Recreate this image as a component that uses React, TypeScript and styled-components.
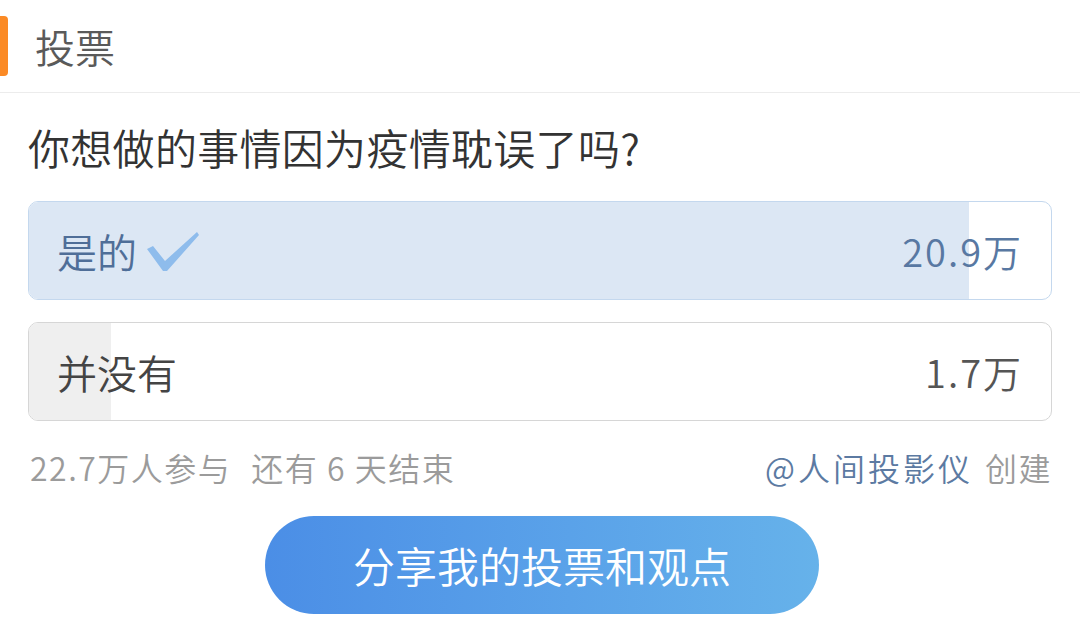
import React from "react";
import styled, { createGlobalStyle } from "styled-components";

const Global = createGlobalStyle`
  html, body { margin: 0; padding: 0; background: #ffffff; }
  body { font-family: "Noto Sans CJK SC", "Noto Sans", sans-serif; font-weight: 350; }
`;

const Page = styled.div`
  width: 1080px;
  height: 638px;
  background: #ffffff;
  display: flex;
  flex-direction: column;
  overflow: hidden;
`;

const Header = styled.div`
  height: 92px;
  display: flex;
  align-items: center;
  gap: 27px;
  border-bottom: 1px solid #ececec;
`;

const Accent = styled.div`
  width: 8px;
  height: 60px;
  background: #fb8a25;
  border-radius: 0 4px 4px 0;
`;

const HeaderTitle = styled.div`
  font-size: 40px;
  color: #5a5a5a;
  line-height: 1;
`;

const Body = styled.div`
  padding: 0 28px;
  display: flex;
  flex-direction: column;
`;

const Question = styled.div`
  font-size: 42px;
  color: #333333;
  line-height: 1;
  margin-top: 32px;
  height: 44px;
  display: flex;
  align-items: center;
  letter-spacing: 0.3px;
`;

const Options = styled.div`
  display: flex;
  flex-direction: column;
  gap: 22px;
  margin-top: 32px;
`;

const Option = styled.div<{ $chosen?: boolean }>`
  position: relative;
  height: 99px;
  box-sizing: border-box;
  border: 1px solid ${(p) => (p.$chosen ? "#c4d8ee" : "#d6d6d6")};
  border-radius: 10px;
  overflow: hidden;
  display: flex;
  align-items: center;
  justify-content: space-between;
  padding: 0 28px 0 28px;
`;

const Fill = styled.div<{ $chosen?: boolean }>`
  position: absolute;
  left: 0;
  top: 0;
  bottom: 0;
  background: ${(p) => (p.$chosen ? "#dce7f4" : "#efefef")};
`;

const Label = styled.div<{ $chosen?: boolean }>`
  position: relative;
  display: flex;
  align-items: center;
  gap: 10px;
  font-size: 40px;
  line-height: 1;
  color: ${(p) => (p.$chosen ? "#4f6e98" : "#444444")};
`;

const Count = styled.div<{ $chosen?: boolean }>`
  position: relative;
  font-size: 38px;
  line-height: 1;
  letter-spacing: 2px;
  color: ${(p) => (p.$chosen ? "#5878a2" : "#555555")};
`;

const Footer = styled.div`
  display: flex;
  justify-content: space-between;
  align-items: center;
  margin-top: 28px;
  height: 36px;
  font-size: 32px;
  line-height: 1;
  color: #9b9b9b;
  padding-left: 2px;
  letter-spacing: 1.5px;
`;

const Meta = styled.div`
  display: flex;
  gap: 20px;
`;

const Creator = styled.div`
  display: flex;
  gap: 12px;
  margin-right: 0;
`;

const Author = styled.span`
  color: #5c7aa2;
  letter-spacing: 3px;
`;

const ButtonRow = styled.div`
  display: flex;
  justify-content: center;
  margin-top: 31px;
`;

const ShareButton = styled.button`
  width: 554px;
  height: 98px;
  margin-left: 4px;
  border: none;
  border-radius: 49px;
  background: linear-gradient(90deg, #4b8ee6 0%, #5aa2e9 55%, #66b2ea 100%);
  color: #ffffff;
  font-family: "Noto Sans CJK SC", "Noto Sans", sans-serif;
  font-weight: 350;
  font-size: 42px;
  line-height: 1;
  cursor: pointer;
`;

const Check = () => (
  <svg width="52" height="44" viewBox="0 0 52 44" aria-hidden="true">
    <path
      d="M0 20 L6 17 L18 32 L50 3 L52 6 L20 42 L16 42 Z"
      fill="#8ebcec"
    />
  </svg>
);

const options = [
  { label: "是的", count: "20.9万", pct: 92, chosen: true },
  { label: "并没有", count: "1.7万", pct: 8, chosen: false },
];

export default function App() {
  return (
    <Page>
      <Global />
      <Header>
        <Accent />
        <HeaderTitle>投票</HeaderTitle>
      </Header>
      <Body>
        <Question>你想做的事情因为疫情耽误了吗?</Question>
        <Options>
          {options.map((o) => (
            <Option key={o.label} $chosen={o.chosen}>
              <Fill $chosen={o.chosen} style={{ width: `${o.pct}%` }} />
              <Label $chosen={o.chosen}>
                {o.label}
                {o.chosen && <Check />}
              </Label>
              <Count $chosen={o.chosen}>{o.count}</Count>
            </Option>
          ))}
        </Options>
        <Footer>
          <Meta>
            <span>22.7万人参与</span>
            <span>还有 6 天结束</span>
          </Meta>
          <Creator>
            <Author>@人间投影仪</Author>
            <span>创建</span>
          </Creator>
        </Footer>
        <ButtonRow>
          <ShareButton>分享我的投票和观点</ShareButton>
        </ButtonRow>
      </Body>
    </Page>
  );
}
